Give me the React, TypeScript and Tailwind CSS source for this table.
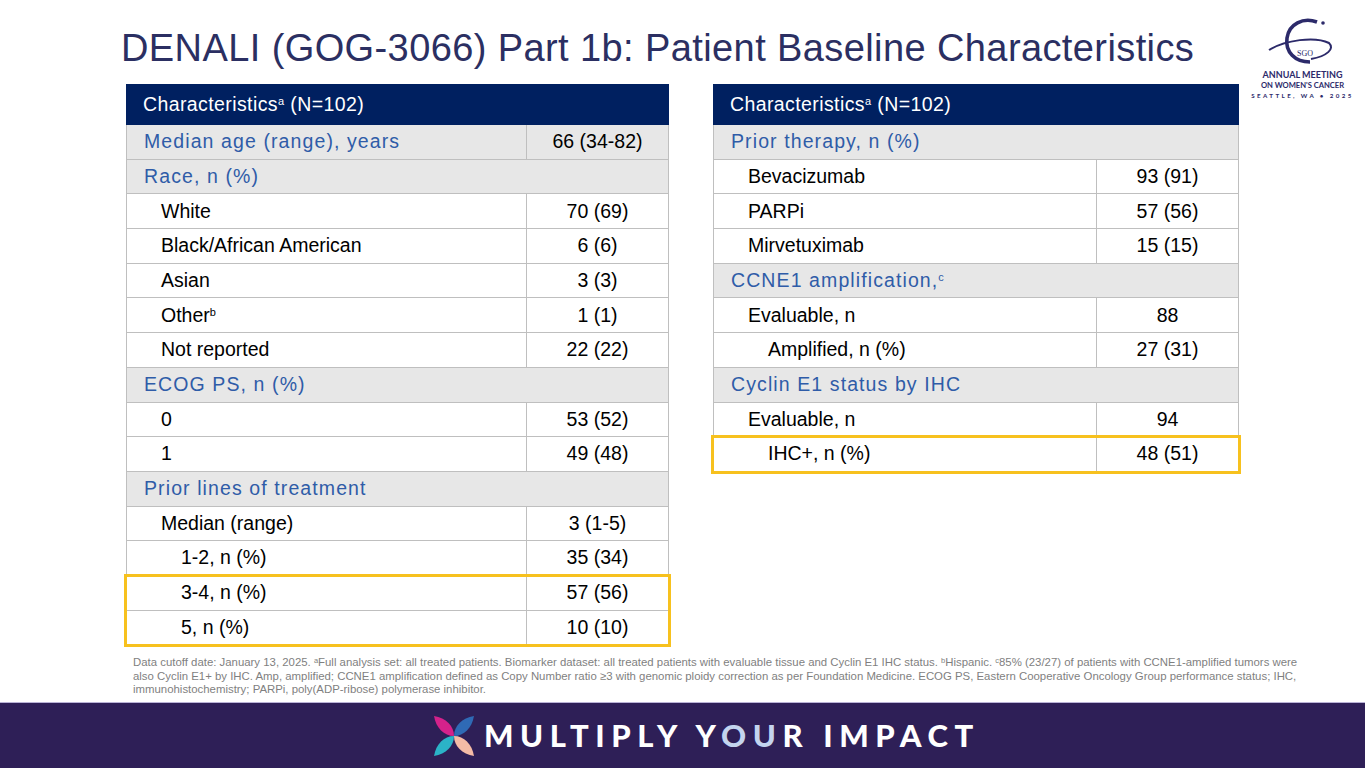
import React from 'react';

type Row = {
  label: string;
  value?: string;
  kind: 'section' | 'row';
  indent?: 1 | 2;
  sup?: string;
  hl?: boolean;
};

const leftRows: Row[] = [
  { label: 'Median age (range), years', value: '66 (34-82)', kind: 'section' },
  { label: 'Race, n (%)', kind: 'section' },
  { label: 'White', value: '70 (69)', kind: 'row', indent: 1 },
  { label: 'Black/African American', value: '6 (6)', kind: 'row', indent: 1 },
  { label: 'Asian', value: '3 (3)', kind: 'row', indent: 1 },
  { label: 'Other', sup: 'b', value: '1 (1)', kind: 'row', indent: 1 },
  { label: 'Not reported', value: '22 (22)', kind: 'row', indent: 1 },
  { label: 'ECOG PS, n (%)', kind: 'section' },
  { label: '0', value: '53 (52)', kind: 'row', indent: 1 },
  { label: '1', value: '49 (48)', kind: 'row', indent: 1 },
  { label: 'Prior lines of treatment', kind: 'section' },
  { label: 'Median (range)', value: '3 (1-5)', kind: 'row', indent: 1 },
  { label: '1-2, n (%)', value: '35 (34)', kind: 'row', indent: 2 },
  { label: '3-4, n (%)', value: '57 (56)', kind: 'row', indent: 2, hl: true },
  { label: '5, n (%)', value: '10 (10)', kind: 'row', indent: 2, hl: true },
];

const rightRows: Row[] = [
  { label: 'Prior therapy, n (%)', kind: 'section' },
  { label: 'Bevacizumab', value: '93 (91)', kind: 'row', indent: 1 },
  { label: 'PARPi', value: '57 (56)', kind: 'row', indent: 1 },
  { label: 'Mirvetuximab', value: '15 (15)', kind: 'row', indent: 1 },
  { label: 'CCNE1 amplification,', sup: 'c', kind: 'section' },
  { label: 'Evaluable, n', value: '88', kind: 'row', indent: 1 },
  { label: 'Amplified, n (%)', value: '27 (31)', kind: 'row', indent: 2 },
  { label: 'Cyclin E1 status by IHC', kind: 'section' },
  { label: 'Evaluable, n', value: '94', kind: 'row', indent: 1 },
  { label: 'IHC+, n (%)', value: '48 (51)', kind: 'row', indent: 2, hl: true },
];

function TableRow({ row }: { row: Row }) {
  const section = row.kind === 'section';
  return (
    <div
      className={`flex h-[34.7px] border-x border-b border-[#bfbfbf] ${section ? 'bg-[#e7e7e7]' : 'bg-white'}`}
    >
      <div
        className={`flex flex-1 items-center ${row.value ? 'border-r border-[#bfbfbf]' : ''} ${
          section ? 'pl-[17px] text-[#2f5ca8] tracking-[1.1px]' : row.indent === 2 ? 'pl-[54px] text-black' : 'pl-[34px] text-black'
        }`}
      >
        <span>
          {row.label}
          {row.sup && <sup className="text-[11px]">{row.sup}</sup>}
        </span>
      </div>
      {row.value && (
        <div className="flex w-[141px] items-center justify-center text-black">{row.value}</div>
      )}
    </div>
  );
}

function DataTable({ rows, width }: { rows: Row[]; width: string }) {
  const plain = rows.filter(r => !r.hl);
  const marked = rows.filter(r => r.hl);
  return (
    <div className={`${width} flex flex-col text-[19.5px]`}>
      <div className="flex h-[41px] items-center bg-[#002060] pl-[17px] text-white tracking-[0.4px]">
        <span>
          Characteristics<sup className="text-[11px]">a</sup> (N=102)
        </span>
      </div>
      {plain.map((r, i) => (
        <TableRow key={i} row={r} />
      ))}
      {marked.length > 0 && (
        <div className="outline outline-[3px] outline-[#f7c11e] -outline-offset-1">
          {marked.map((r, i) => (
            <TableRow key={i} row={r} />
          ))}
        </div>
      )}
    </div>
  );
}

function SgoLogo() {
  return (
    <div className="flex w-[95px] flex-col items-center font-['Lato',sans-serif] text-[#2c2a6a]">
      <svg width="95" height="58" viewBox="0 0 95 58">
        <path d="M62 10 C48 5 34 12 32 26 C30 40 40 50 55 50" fill="none" stroke="#2c2a6a" strokeWidth="3.6" />
        <path d="M14 38 C30 28 60 24 74 31 C80 37 72 44 56 47" fill="none" stroke="#2c2a6a" strokeWidth="2" />
        <circle cx="68" cy="11" r="1.8" fill="#2c2a6a" />
        <text x="50" y="44" textAnchor="middle" fontFamily="Liberation Serif, serif" fontSize="8" fill="#2c2a6a">
          SGO
        </text>
      </svg>
      <div className="text-[9px] font-bold leading-[10px] whitespace-nowrap">ANNUAL MEETING</div>
      <div className="text-[7.6px] font-bold leading-[10px] whitespace-nowrap">ON WOMEN'S CANCER</div>
      <div className="text-[6.2px] font-bold leading-[11px] tracking-[2.4px] whitespace-nowrap">SEATTLE, WA • 2025</div>
    </div>
  );
}

function Petals() {
  return (
    <svg width="44" height="44" viewBox="0 0 44 44">
      <path d="M2 2 C14 4 22 12 22 22 C12 22 4 14 2 2 Z" fill="#d4228b" />
      <path d="M42 2 C30 4 22 12 22 22 C32 22 40 14 42 2 Z" fill="#2f6ab5" />
      <path d="M2 42 C4 30 12 22 22 22 C22 32 14 40 2 42 Z" fill="#2bb3c7" />
      <path d="M42 42 C40 30 32 22 22 22 C22 32 30 40 42 42 Z" fill="#f4bba6" />
    </svg>
  );
}

export default function App() {
  return (
    <div className="relative flex h-[768px] w-[1365px] flex-col overflow-hidden bg-white font-['Liberation_Sans',Arial,sans-serif]">
      <div className="flex">
        <div className="flex flex-col">
          <h1 className="h-[84px] pl-[121px] pt-[29px] text-[38px] leading-[38px] tracking-[0.4px] text-[#2b2f62] whitespace-nowrap">
            DENALI (GOG-3066) Part 1b: Patient Baseline Characteristics
          </h1>
          <div className="flex gap-[44px] pl-[126px]">
            <DataTable rows={leftRows} width="w-[543px]" />
            <DataTable rows={rightRows} width="w-[526px]" />
          </div>
        </div>
        <div className="ml-[16px] mt-[12px]">
          <SgoLogo />
        </div>
      </div>

      <p className="mt-[11px] pl-[133px] text-[11.4px] leading-[13.5px] text-[#7f7f7f] whitespace-nowrap">
        Data cutoff date: January 13, 2025. <sup className="text-[7.5px]">a</sup>Full analysis set: all treated patients. Biomarker dataset: all treated patients with evaluable tissue and Cyclin E1 IHC status. <sup className="text-[7.5px]">b</sup>Hispanic. <sup className="text-[7.5px]">c</sup>85% (23/27) of patients with CCNE1-amplified tumors were
        <br />
        also Cyclin E1+ by IHC. Amp, amplified; CCNE1 amplification defined as Copy Number ratio ≥3 with genomic ploidy correction as per Foundation Medicine. ECOG PS, Eastern Cooperative Oncology Group performance status; IHC,
        <br />
        immunohistochemistry; PARPi, poly(ADP-ribose) polymerase inhibitor.
      </p>

      <div className="mt-auto flex h-[66px] items-center gap-[8px] border-t border-[#b9b2d6] bg-[#2e1f57] pl-[432px]">
        <Petals />
        <div className="font-['Lato',sans-serif] text-[31px] font-black tracking-[6.6px] text-white whitespace-nowrap">
          MULTIPLY Y<span className="text-[#c4d4ee]">OU</span>R IMPACT
        </div>
      </div>
    </div>
  );
}
